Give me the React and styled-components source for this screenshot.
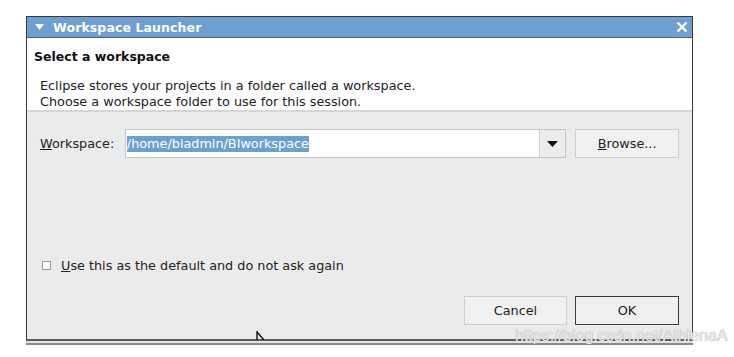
import React from 'react'
import styled, { createGlobalStyle } from 'styled-components'

const GlobalStyle = createGlobalStyle`
  html, body {
    margin: 0;
    padding: 0;
    background: #ffffff;
    font-family: 'DejaVu Sans', 'Liberation Sans', sans-serif;
  }
`

const Page = styled.div`
  position: relative;
  width: 734px;
  height: 357px;
  overflow: hidden;
  padding: 16px 0 0 26px;
  box-sizing: border-box;
`

const Window = styled.div`
  width: 667px;
  box-sizing: border-box;
  border: 1px solid #3a3a3a;
  border-bottom: none;
  display: flex;
  flex-direction: column;
`

const TitleBar = styled.div`
  height: 20px;
  background: #6e9fd1;
  border-bottom: 1px solid #4d5f73;
  display: flex;
  align-items: center;
  padding: 0 4px 0 8px;
  color: #ffffff;
  font-weight: bold;
  font-size: 12.5px;
  letter-spacing: 0.1px;
  & > .title {
    flex: 1;
    margin-left: 9px;
  }
`

const Header = styled.div`
  height: 74px;
  background: #ffffff;
  border-bottom: 2px solid #d6d6d6;
  padding: 11px 0 0 7px;
  box-sizing: border-box;
  & > h1 {
    margin: 0 0 13px;
    font-size: 12.5px;
    font-weight: bold;
    color: #111;
    line-height: 16px;
  }
  & > p {
    margin: 0 0 0 6px;
    font-size: 12.8px;
    line-height: 16px;
    color: #222;
  }
`

const Body = styled.div`
  background: #ebebeb;
  padding: 17px 13px 14px 13px;
  display: flex;
  flex-direction: column;
`

const Row = styled.div`
  display: flex;
  align-items: center;
  height: 29px;
`

const Label = styled.span`
  font-size: 12.8px;
  color: #222;
  width: 85px;
`

const Combo = styled.div`
  display: flex;
  height: 29px;
  width: 442px;
  box-sizing: border-box;
  border: 1px solid #c4c4c4;
  background: #ffffff;
  & > .value {
    flex: 1;
    display: flex;
    align-items: center;
    padding-left: 1px;
    font-size: 12.8px;
    & > span {
      background: #6e9fd1;
      color: #ffffff;
      line-height: 16px;
    }
  }
  & > .arrow {
    width: 25px;
    border-left: 1px solid #d0d0d0;
    background: #ececec;
    display: flex;
    align-items: center;
    justify-content: center;
  }
`

const Button = styled.button`
  width: ${p => p.$width || 104}px;
  height: 29px;
  box-sizing: border-box;
  border: 1px solid ${p => (p.$primary ? '#3b3b3b' : '#cfcfcf')};
  background: ${p => (p.$primary ? '#efefef' : '#f1f1f1')};
  font-family: 'DejaVu Sans', 'Liberation Sans', sans-serif;
  font-size: 12.8px;
  color: #222;
  padding: 0;
  margin-left: ${p => p.$gap || 0}px;
`

const CheckRow = styled.div`
  display: flex;
  align-items: center;
  margin: 99px 0 0 2px;
  font-size: 12.8px;
  color: #222;
  height: 16px;
  & > .box {
    width: 7px;
    height: 7px;
    border: 1px solid #9a9a9a;
    background: #fff;
    margin-right: 10px;
  }
`

const Actions = styled.div`
  display: flex;
  justify-content: flex-end;
  margin-top: 23px;
`

const Frame = styled.div`
  height: 2px;
  border-top: 2px solid #5a5a5a;
  border-bottom: 2px solid #8a8a8a;
  background: #e4e4e4;
  margin-left: -1px;
  width: 667px;
`

const Cursor = styled.svg`
  position: absolute;
  left: 256px;
  top: 331px;
`

const Watermark = styled.div`
  position: absolute;
  left: 515px;
  top: 327px;
  font-family: 'Liberation Sans', Arial, sans-serif;
  font-size: 16px;
  color: #ececec;
  text-shadow: 0 0 1px #8a8a8a;
`

export default function App() {
  return (
    <>
      <GlobalStyle />
      <Page>
        <Window>
          <TitleBar>
            <svg width="9" height="6" viewBox="0 0 9 6">
              <path d="M0 0 H9 L4.5 6 Z" fill="#ffffff" />
            </svg>
            <span className="title">Workspace Launcher</span>
            <svg width="12" height="12" viewBox="0 0 12 12">
              <path d="M1.5 1.5 L10.5 10.5 M10.5 1.5 L1.5 10.5" stroke="#ffffff" strokeWidth="2.4" />
            </svg>
          </TitleBar>
          <Header>
            <h1>Select a workspace</h1>
            <p>Eclipse stores your projects in a folder called a workspace.</p>
            <p>Choose a workspace folder to use for this session.</p>
          </Header>
          <Body>
            <Row>
              <Label><u>W</u>orkspace:</Label>
              <Combo>
                <div className="value"><span>/home/biadmin/BIworkspace</span></div>
                <div className="arrow">
                  <svg width="11" height="6" viewBox="0 0 11 6">
                    <path d="M0 0 H11 L5.5 6 Z" fill="#111" />
                  </svg>
                </div>
              </Combo>
              <Button $gap={9}><u>B</u>rowse...</Button>
            </Row>
            <CheckRow>
              <span className="box" />
              <span><u>U</u>se this as the default and do not ask again</span>
            </CheckRow>
            <Actions>
              <Button $width={103}>Cancel</Button>
              <Button $primary $gap={8}>OK</Button>
            </Actions>
          </Body>
          <Frame />
        </Window>
        <Cursor width="12" height="12" viewBox="0 0 12 12">
          <path d="M1 0 L1 9 M1 1 L8 9" stroke="#111" strokeWidth="1.4" fill="none" />
        </Cursor>
        <Watermark>https://blog.csdn.net/AthlenaA</Watermark>
      </Page>
    </>
  )
}
